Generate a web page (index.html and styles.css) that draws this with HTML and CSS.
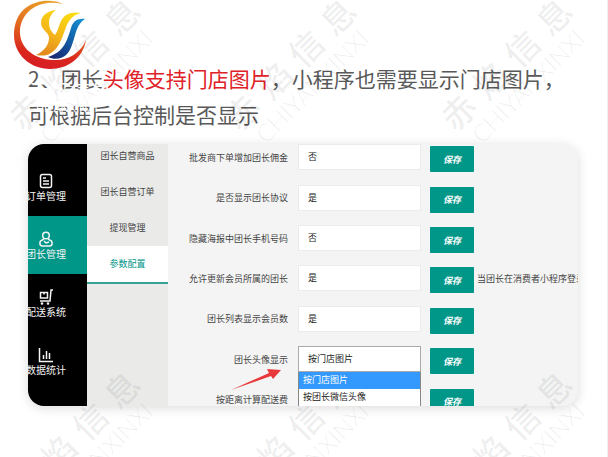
FILE: index.html
```html
<!DOCTYPE html>
<html lang="zh-CN">
<head>
<meta charset="utf-8">
<title>团长头像显示</title>
<link rel="stylesheet" href="styles.css">
</head>
<body>
<div class="page">
  <header class="intro">
    <p class="intro-text">2、团长<em class="accent">头像支持门店图片</em>，小程序也需要显示门店图片，<br>可根据后台控制是否显示</p>
    <div class="brand">
      <svg class="brand-mark" viewBox="0 0 74 70" aria-hidden="true">
        <defs>
          <linearGradient id="ring" x1="0.6" y1="0" x2="0.4" y2="1"><stop offset="0" stop-color="#e9a227"/><stop offset="0.45" stop-color="#e2651f"/><stop offset="0.8" stop-color="#d9251c"/><stop offset="1" stop-color="#d61f26"/></linearGradient>
          <linearGradient id="gold" x1="0.8" y1="0" x2="0.3" y2="1"><stop offset="0" stop-color="#fbe10e"/><stop offset="0.6" stop-color="#f4b41a"/><stop offset="1" stop-color="#e28a1e"/></linearGradient>
          <linearGradient id="blue" x1="1" y1="0" x2="0.2" y2="1"><stop offset="0" stop-color="#1795d4"/><stop offset="0.5" stop-color="#1260a8"/><stop offset="1" stop-color="#1b2a75"/></linearGradient>
        </defs>
        <path fill="url(#ring)" d="M49 4C32-4 0 2 0 35c0 20 17 34 36 34 18 0 33-11 36-29-6 14-19 21-33 20C19 59 5 47 6 30 8 9 28-1 49 4Z"/>
        <path fill="url(#gold)" d="M42 10C33 11 27 16 27 23c0 7 8 9 8 15 0 7-5 13-13 17 5 1 11 1 15-2 8-5 11-15 14-23 3-9 7-15 16-17-9-2-17 1-20 8-2 4-3 10-6 14-4-3-6-7-6-12 0-6 3-10 7-13Z"/>
        <path fill="url(#blue)" d="M71 19c-7-1-12 2-14 9-4 13-7 24-23 29 6 3 14 2 18-2 10-9 7-29 19-36Z"/>
      </svg>
      <div class="brand-name">赤焰信息</div>
      <div class="brand-latin">CHIYANXINXI</div>
    </div>
  </header>

  <div class="card">
    <nav class="sidebar">
      <a class="side-item" href="#"><svg class="icon" viewBox="0 0 16 16"><rect x="2.500" y="1.500" width="11" height="13" rx="2"/><path d="M5 5h3M5 8h6M5 11h6"/></svg><span>订单管理</span></a>
      <a class="side-item active" href="#"><svg class="icon" viewBox="0 0 16 16"><circle cx="8" cy="4.500" r="3.300"/><path d="M6 7.500 4.500 9C1 9.500 1 15 4.500 15h7c3.500 0 3.500-5.500 0-6L10 7.500M6 10l2 2 3-1"/></svg><span>团长管理</span></a>
      <a class="side-item" href="#"><svg class="icon" viewBox="0 0 16 16"><path d="M15 1h-2l-1 11H2M2.500 3.500h7V9h-7zM6 3.500v2"/><circle cx="4" cy="14.500" r=".6"/><circle cx="10" cy="14.500" r=".6"/></svg><span>配送系统</span></a>
      <a class="side-item" href="#"><svg class="icon" viewBox="0 0 16 16"><path d="M1.500 1v13.500H15M5.500 8v4M8.500 4v8M11.500 6v6"/></svg><span>数据统计</span></a>
    </nav>
    <nav class="submenu">
      <a href="#">团长自营商品</a>
      <a href="#">团长自营订单</a>
      <a href="#">提现管理</a>
      <a class="current" href="#">参数配置</a>
    </nav>
    <form class="settings">
      <div class="row"><label for="f1">批发商下单增加团长佣金</label><select id="f1"><option>否</option></select><button type="button">保存</button></div>
      <div class="row"><label for="f2">是否显示团长协议</label><select id="f2"><option>是</option></select><button type="button">保存</button></div>
      <div class="row"><label for="f3">隐藏海报中团长手机号码</label><select id="f3"><option>否</option></select><button type="button">保存</button></div>
      <div class="row"><label for="f4">允许更新会员所属的团长</label><select id="f4"><option>是</option></select><button type="button">保存</button><span class="note">当团长在消费者小程序登录</span></div>
      <div class="row"><label for="f5">团长列表显示会员数</label><select id="f5"><option>是</option></select><button type="button">保存</button></div>
      <div class="row"><label for="f6">团长头像显示</label>
        <div class="dropdown">
          <select id="f6" class="open"><option>按门店图片</option></select>
          <ul class="options"><li class="chosen">按门店图片</li><li>按团长微信头像</li></ul>
          <svg class="arrow" viewBox="0 0 52 22" aria-hidden="true"><path d="M1 21 39 4 37 0 51 1 43 10 41 7Z"/></svg>
        </div>
        <button type="button">保存</button></div>
      <div class="row"><label for="f7">按距离计算配送费</label><select id="f7"><option>否</option></select><button type="button">保存</button></div>
    </form>
  </div>

  <div class="marks" aria-hidden="true">
    <div class="mark"><div class="mark-cjk"><span>赤</span><span>焰</span><span>信</span><span>息</span></div><div class="mark-latin">CHIYANXINXI</div></div>
    <div class="mark"><div class="mark-cjk"><span>赤</span><span>焰</span><span>信</span><span>息</span></div><div class="mark-latin">CHIYANXINXI</div></div>
    <div class="mark"><div class="mark-cjk"><span>赤</span><span>焰</span><span>信</span><span>息</span></div><div class="mark-latin">CHIYANXINXI</div></div>
    <div class="mark"><div class="mark-cjk"><span>赤</span><span>焰</span><span>信</span><span>息</span></div><div class="mark-latin">CHIYANXINXI</div></div>
    <div class="mark"><div class="mark-cjk"><span>赤</span><span>焰</span><span>信</span><span>息</span></div><div class="mark-latin">CHIYANXINXI</div></div>
    <div class="mark"><div class="mark-cjk"><span>赤</span><span>焰</span><span>信</span><span>息</span></div><div class="mark-latin">CHIYANXINXI</div></div>
  </div>
</div>
</body>
</html>
```
FILE: styles.css
```css
* { box-sizing: border-box; }

body {
  margin: 0;
  background: #fff;
  font-family: "Liberation Sans", "Noto Sans CJK SC", sans-serif;
}

.page {
  position: relative;
  display: flex;
  flex-direction: column;
  height: 100vh;
  padding: 60px 29px 51px 28px;
  border-right: 1px solid #f0f0f0;
  overflow: hidden;
}

.intro-text {
  margin: 0 0 12px;
  font-family: "Noto Sans CJK SC", sans-serif;
  font-size: 21px;
  line-height: 36px;
  color: #595959;
  white-space: nowrap;
}

.accent { font-style: normal; color: #e02127; }

.brand {
  position: absolute;
  z-index: 1;
  top: 0;
  left: 14px;
  color: #fff;
}

.brand-mark { display: block; width: 74px; height: 70px; }

.brand-name {
  margin: 6px 0 0 14px;
  font-family: "Noto Sans CJK SC", sans-serif;
  font-size: 21px;
  line-height: 26px;
}

.brand-latin { margin: 0 0 0 14px; font-size: 11px; line-height: 12px; }

.card {
  display: flex;
  flex: 1;
  min-height: 0;
  overflow: hidden;
  border-radius: 16px;
  background: #f4f4f4;
  box-shadow: 0 2px 12px rgba(0, 0, 0, 0.14);
}

.card a { text-decoration: none; }

.sidebar {
  flex: none;
  width: 59px;
  padding-top: 14px;
  background: #000;
}

.side-item {
  display: flex;
  flex-direction: column;
  align-items: center;
  gap: 1px;
  height: 58px;
  padding: 15px 23px 0 0;
  font-size: 10px;
  line-height: 14px;
  color: #f4f4f4;
  white-space: nowrap;
}

.side-item.active { background: #009788; }

.icon {
  flex: none;
  width: 16px;
  height: 16px;
  fill: none;
  stroke: currentColor;
  stroke-width: 1.500;
}

.submenu {
  flex: none;
  width: 81px;
  margin-top: -6px;
  background: #eaeae9;
}

.submenu a {
  display: block;
  height: 36px;
  font-size: 9px;
  line-height: 36px;
  text-align: center;
  color: #444;
}

.submenu a.current {
  background: #fff;
  border-bottom: 2px solid #36a297;
  height: 38px;
  color: #009788;
}

.settings {
  display: flex;
  flex: 1;
  flex-direction: column;
  min-width: 0;
  height: 283px;
  margin-top: -7px;
}

.row {
  display: grid;
  flex: 1;
  grid-template-columns: 120px minmax(0, 1fr) 44px 104px;
  align-items: center;
  font-size: 9px;
  color: #444;
}

.row label { text-align: right; white-space: nowrap; }

.row select {
  width: 100%;
  height: 26px;
  padding: 0 9px;
  border: 1px solid #ebebeb;
  border-radius: 0;
  background: #fff;
  appearance: none;
  font: inherit;
  color: #222;
}

.row > select, .dropdown { margin: 0 9px 0 10px; width: auto; }

.row select.open { display: block; border-color: #aaa; }

.row button {
  height: 26px;
  margin-top: 4px;
  padding: 0;
  border: 0;
  border-radius: 1px;
  background: #009688;
  font: italic bold 9px "Liberation Sans", "Noto Sans CJK SC", sans-serif;
  color: #fff;
}

.note { padding-left: 3px; overflow: hidden; white-space: nowrap; }

.dropdown { position: relative; }

.options {
  position: absolute;
  z-index: 2;
  top: 26px;
  left: 0;
  right: 0;
  margin: 0;
  padding: 0;
  border: 1px solid #888;
  border-top: 0;
  background: #fff;
  list-style: none;
  line-height: 17px;
  color: #222;
}

.options li { padding-left: 4px; }
.options .chosen { background: #3399ff; color: #fff; }

.arrow {
  position: absolute;
  top: 23px;
  left: -68px;
  width: 52px;
  height: 22px;
  fill: #e8383a;
}

.marks {
  position: absolute;
  top: -28px;
  left: -26px;
  display: grid;
  grid-template-columns: repeat(3, 216px);
  grid-auto-rows: 373px;
  color: rgba(0, 0, 0, 0.07);
  pointer-events: none;
}

.mark {
  width: 216px;
  height: 200px;
  display: flex;
  flex-direction: column;
  align-items: center;
  justify-content: center;
  transform: rotate(-45deg);
}

.mark-cjk {
  display: flex;
  gap: 11px;
  font-family: "Noto Sans CJK SC", sans-serif;
  font-size: 34px;
  font-weight: 500;
  line-height: 40px;
}

.mark-latin {
  font-family: Lato, sans-serif;
  font-weight: 300;
  font-size: 24px;
  line-height: 24px;
}
```
